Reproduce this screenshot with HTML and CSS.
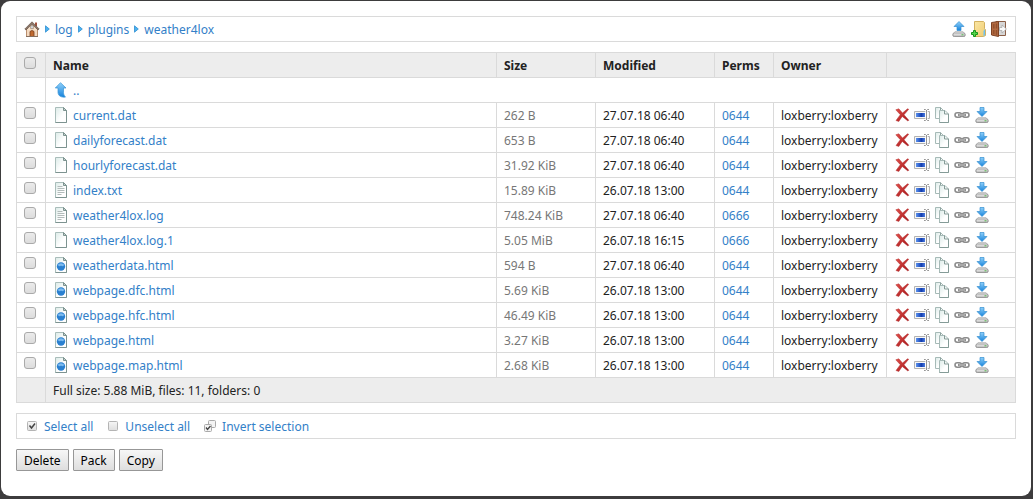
FILE: index.html
```html
<!DOCTYPE html>
<html lang="en">
<head>
<meta charset="utf-8">
<title>weather4lox</title>
<link rel="stylesheet" href="styles.css">
</head>
<body>
<svg class="sprite" aria-hidden="true">
  <defs>
    <linearGradient id="g-page" x1="0" y1="0" x2="1" y2="1"><stop offset="0" stop-color="#dcebe8"/><stop offset=".6" stop-color="#fff"/></linearGradient>
    <linearGradient id="g-blue" x1="0" y1="0" x2="0" y2="1"><stop offset="0" stop-color="#8fd0fa"/><stop offset="1" stop-color="#1683dc"/></linearGradient>
    <linearGradient id="g-disk" x1="0" y1="0" x2="0" y2="1"><stop offset="0" stop-color="#f4f4f4"/><stop offset="1" stop-color="#b4b4b4"/></linearGradient>
    <linearGradient id="g-bar" x1="0" y1="0" x2="1" y2="0"><stop offset="0" stop-color="#5d93ee"/><stop offset=".6" stop-color="#123db0"/><stop offset="1" stop-color="#4a7be0"/></linearGradient>
    <linearGradient id="g-red" x1="0" y1="0" x2="1" y2="1"><stop offset="0" stop-color="#e0504a"/><stop offset="1" stop-color="#a31318"/></linearGradient>
    <linearGradient id="g-folder" x1="0" y1="0" x2="1" y2="1"><stop offset="0" stop-color="#fbe7a4"/><stop offset="1" stop-color="#efcb70"/></linearGradient>
    <linearGradient id="g-box" x1="0" y1="0" x2="0" y2="1"><stop offset="0" stop-color="#f6f6f6"/><stop offset="1" stop-color="#dedede"/></linearGradient>
  </defs>
  <symbol id="home" viewBox="0 0 16 16">
    <path d="M2.500 7.500h11v8h-11z" fill="#f3d9c0" stroke="#b98e6e"/>
    <path d="M11 1.500h2v4h-2z" fill="#a4513c"/>
    <path d="M8 3.400 3.200 8v1h9.600V8z" fill="#f8e2cb"/>
    <path d="M8 .8.8 8l1.200 1L8 3.200 14 9l1.200-1z" fill="#8d7667" stroke="#5b4a42" stroke-width=".6"/>
    <path d="M6.700 4.700h2.600v3H6.700z" fill="#d9e6f2" stroke="#8b6a50" stroke-width=".6"/>
    <path d="M6 15.500v-5q2-2 4 0v5z" fill="#c0692f" stroke="#78401e" stroke-width=".8"/>
    <path d="M2 15.500h12" stroke="#866f5f"/>
  </symbol>
  <symbol id="crumb" viewBox="0 0 5 8"><path d="M.5.8 4.300 4 .5 7.200z" fill="#4db2ee" stroke="#2d8ed3" stroke-width=".8"/></symbol>
  <symbol id="up" viewBox="0 0 16 16"><path d="M7.500.7 13 6h-2.500v4.500c0 2 .8 3.400 2 4.600-4.400.4-7.200-1.100-7.500-4.600V6H2.300z" fill="url(#g-blue)" stroke="#3693d6" stroke-width=".7"/></symbol>
  <symbol id="file" viewBox="0 0 16 16">
    <path d="M2.500.5h8l3 3v12h-11z" fill="url(#g-page)" stroke="#a9bdba"/>
    <path d="M13.500 3.500v12h-11" fill="none" stroke="#7d9390"/>
    <path d="M10.500.5v3h3z" fill="#c5d4d1" stroke="#7d9390"/>
  </symbol>
  <symbol id="text" viewBox="0 0 16 16">
    <use href="#file"/><path d="M4.500 4.500h5m-5 2h7m-7 2h7m-7 2h7m-7 2h4" stroke="#b3bcbb" fill="none"/>
  </symbol>
  <symbol id="html" viewBox="0 0 16 16">
    <use href="#file"/><circle cx="8" cy="9.500" r="4.200" fill="#2a80d0"/><path d="M4.500 8Q8 4.500 11.500 8 9.500 10 8 8.500 6.500 10 4.500 8z" fill="#7dbcf0"/>
  </symbol>
  <symbol id="disk" viewBox="0 0 16 16">
    <path d="M4 10.500h8l2 2.500v2H2v-2z" fill="#eee" stroke="#b4b4b4" stroke-width=".7"/>
    <rect x="2" y="12" width="12" height="3.600" rx="1.300" fill="url(#g-disk)" stroke="#858585" stroke-width=".8"/>
    <path d="M10.500 13.800h2" stroke="#51b84b"/>
  </symbol>
  <symbol id="upload" viewBox="0 0 16 16"><use href="#disk"/><path d="M8 .5 13 5.500h-3v4H6v-4H3z" fill="url(#g-blue)" stroke="#358fd1" stroke-width=".7"/></symbol>
  <symbol id="download" viewBox="0 0 16 16"><use href="#disk"/><path d="M6 .5h4v4h3l-5 5-5-5h3z" fill="url(#g-blue)" stroke="#358fd1" stroke-width=".7"/></symbol>
  <symbol id="folder" viewBox="0 0 16 16">
    <path d="M3.500.5h9l1 1v6l1 1v6l-2 1h-9z" fill="url(#g-folder)" stroke="#d3b160"/>
    <path d="M12.500 15.500V10l1.500-2v6z" fill="#6ec1ef"/>
    <path d="M2.500 9.500h2v2h2v2h-2v2h-2v-2h-2v-2h2z" fill="#57d64c" stroke="#15951b"/>
  </symbol>
  <symbol id="door" viewBox="0 0 16 16">
    <path d="M5 .5h9.500v14H5z" fill="#d6d6d6" stroke="#8c6048"/>
    <path d="M.5 1.500 7.500.5v15l-7-1.500z" fill="#b26a41" stroke="#7d4326"/>
    <path d="M2 3.300 3.500 3v4.500H2zM4.800 2.800l1.400-.3v5H4.800zM2 9h1.500v4.300L2 13zm2.800 0h1.400v5l-1.400-.3z" fill="#92502e"/>
    <path d="M8.500 6.500H11V4l4.500 4-4.500 4V9.500H8.500z" fill="#fafafa" stroke="#a5a5a5" stroke-width=".7"/>
  </symbol>
  <symbol id="delete" viewBox="0 0 16 16"><path d="M1.800 2.800 4.800 1.800 8.500 6 13.500 1.800l1.200.5L10 7.800l4.800 5.400-.9.800L8.200 9.400 4.800 14.500 2 13.500l4.300-5.800z" fill="url(#g-red)" stroke="#b53030" stroke-width=".5"/></symbol>
  <symbol id="rename" viewBox="0 0 16 16">
    <path d="M.5 4.500h15v7H.5z" fill="#f7f7f7" stroke="#b2b2b2"/><path d="M2 6h9v4H2z" fill="url(#g-bar)"/>
    <path d="M12.500 3v10" stroke="#fff" stroke-width="2.400"/><path d="M10 2.500h1.500l1 1 1-1H15M12.500 3v10M10 13.500h1.500l1-1 1 1H15" stroke="#8a8a8a" stroke-width=".9" fill="none"/>
  </symbol>
  <symbol id="copy" viewBox="0 0 16 16">
    <path d="M1.500.5h5l3 3v8h-8z" fill="url(#g-page)" stroke="#a6bab7"/><path d="M6.500.5v3h3" fill="none" stroke="#8ea39f"/>
    <path d="M5.500 3.500h5.500l3.500 3.500v8.500h-9z" fill="url(#g-page)" stroke="#a6bab7"/><path d="M10.500 3.500V7h4v8.500h-9" fill="none" stroke="#849b97"/>
  </symbol>
  <symbol id="link" viewBox="0 0 16 16">
    <rect x="1" y="5.800" width="6.500" height="4.400" rx="2.200" fill="#fff" stroke="#8c8c8c" stroke-width="1.600"/><rect x="8.500" y="5.800" width="6.500" height="4.400" rx="2.200" fill="#fff" stroke="#8c8c8c" stroke-width="1.600"/>
    <path d="M4 8h8" stroke="#777" stroke-width="2.400"/><path d="M4.500 8h7" stroke="#dcdcdc"/>
  </symbol>
  <symbol id="all" viewBox="0 0 16 16"><rect x="3.500" y="3.500" width="9" height="9" rx="1" fill="url(#g-box)" stroke="#b4b4b4"/><path d="m5.500 7.500 2 2.500L11 5.500" fill="none" stroke="#444" stroke-width="1.500"/></symbol>
  <symbol id="none" viewBox="0 0 16 16"><rect x="3.500" y="3.500" width="9" height="9" rx="1" fill="url(#g-box)" stroke="#b4b4b4"/></symbol>
  <symbol id="invert" viewBox="0 0 16 16"><rect x="6.500" y="2.500" width="7" height="7" rx="1" fill="#f4f4f4" stroke="#aaa"/><rect x="2.500" y="6.500" width="7" height="7" rx="1" fill="#f4f4f4" stroke="#aaa"/><path d="m4 9.500 1.500 2L8.500 8" fill="none" stroke="#444" stroke-width="1.300"/></symbol>
</svg>
<main class="panel">
  <header class="bar">
    <nav class="crumbs" aria-label="Path">
      <a href="#" aria-label="Home"><svg class="icon"><use href="#home"/></svg></a>
      <svg class="crumb"><use href="#crumb"/></svg><a href="#">log</a>
      <svg class="crumb"><use href="#crumb"/></svg><a href="#">plugins</a>
      <svg class="crumb"><use href="#crumb"/></svg><a href="#">weather4lox</a>
    </nav>
    <div class="actions">
      <a href="#" aria-label="Upload"><svg class="icon"><use href="#upload"/></svg></a>
      <a href="#" aria-label="Create new"><svg class="icon"><use href="#folder"/></svg></a>
      <a href="#" aria-label="Log out"><svg class="icon"><use href="#door"/></svg></a>
    </div>
  </header>
  <table class="files">
    <colgroup><col class="c-check"><col><col class="c-size"><col class="c-date"><col class="c-perms"><col class="c-owner"><col class="c-actions"></colgroup>
    <thead>
      <tr><th><input type="checkbox" class="check" aria-label="Select all files"></th><th>Name</th><th>Size</th><th>Modified</th><th>Perms</th><th>Owner</th><th></th></tr>
    </thead>
    <tbody>
      <tr><td></td><td colspan="6"><a class="name" href="#"><svg class="icon"><use href="#up"/></svg>..</a></td></tr>
      <tr><td><input type="checkbox" class="check" aria-label="current.dat"></td><td><a class="name" href="#"><svg class="icon"><use href="#file"/></svg>current.dat</a></td><td class="size">262 B</td><td>27.07.18 06:40</td><td><a href="#">0644</a></td><td>loxberry:loxberry</td><td><div class="actions"><a href="#" aria-label="Delete"><svg class="icon"><use href="#delete"/></svg></a><a href="#" aria-label="Rename"><svg class="icon"><use href="#rename"/></svg></a><a href="#" aria-label="Copy"><svg class="icon"><use href="#copy"/></svg></a><a href="#" aria-label="Link"><svg class="icon"><use href="#link"/></svg></a><a href="#" aria-label="Download"><svg class="icon"><use href="#download"/></svg></a></div></td></tr>
      <tr><td><input type="checkbox" class="check" aria-label="dailyforecast.dat"></td><td><a class="name" href="#"><svg class="icon"><use href="#file"/></svg>dailyforecast.dat</a></td><td class="size">653 B</td><td>27.07.18 06:40</td><td><a href="#">0644</a></td><td>loxberry:loxberry</td><td><div class="actions"><a href="#" aria-label="Delete"><svg class="icon"><use href="#delete"/></svg></a><a href="#" aria-label="Rename"><svg class="icon"><use href="#rename"/></svg></a><a href="#" aria-label="Copy"><svg class="icon"><use href="#copy"/></svg></a><a href="#" aria-label="Link"><svg class="icon"><use href="#link"/></svg></a><a href="#" aria-label="Download"><svg class="icon"><use href="#download"/></svg></a></div></td></tr>
      <tr><td><input type="checkbox" class="check" aria-label="hourlyforecast.dat"></td><td><a class="name" href="#"><svg class="icon"><use href="#file"/></svg>hourlyforecast.dat</a></td><td class="size">31.92 KiB</td><td>27.07.18 06:40</td><td><a href="#">0644</a></td><td>loxberry:loxberry</td><td><div class="actions"><a href="#" aria-label="Delete"><svg class="icon"><use href="#delete"/></svg></a><a href="#" aria-label="Rename"><svg class="icon"><use href="#rename"/></svg></a><a href="#" aria-label="Copy"><svg class="icon"><use href="#copy"/></svg></a><a href="#" aria-label="Link"><svg class="icon"><use href="#link"/></svg></a><a href="#" aria-label="Download"><svg class="icon"><use href="#download"/></svg></a></div></td></tr>
      <tr><td><input type="checkbox" class="check" aria-label="index.txt"></td><td><a class="name" href="#"><svg class="icon"><use href="#text"/></svg>index.txt</a></td><td class="size">15.89 KiB</td><td>26.07.18 13:00</td><td><a href="#">0644</a></td><td>loxberry:loxberry</td><td><div class="actions"><a href="#" aria-label="Delete"><svg class="icon"><use href="#delete"/></svg></a><a href="#" aria-label="Rename"><svg class="icon"><use href="#rename"/></svg></a><a href="#" aria-label="Copy"><svg class="icon"><use href="#copy"/></svg></a><a href="#" aria-label="Link"><svg class="icon"><use href="#link"/></svg></a><a href="#" aria-label="Download"><svg class="icon"><use href="#download"/></svg></a></div></td></tr>
      <tr><td><input type="checkbox" class="check" aria-label="weather4lox.log"></td><td><a class="name" href="#"><svg class="icon"><use href="#text"/></svg>weather4lox.log</a></td><td class="size">748.24 KiB</td><td>27.07.18 06:40</td><td><a href="#">0666</a></td><td>loxberry:loxberry</td><td><div class="actions"><a href="#" aria-label="Delete"><svg class="icon"><use href="#delete"/></svg></a><a href="#" aria-label="Rename"><svg class="icon"><use href="#rename"/></svg></a><a href="#" aria-label="Copy"><svg class="icon"><use href="#copy"/></svg></a><a href="#" aria-label="Link"><svg class="icon"><use href="#link"/></svg></a><a href="#" aria-label="Download"><svg class="icon"><use href="#download"/></svg></a></div></td></tr>
      <tr><td><input type="checkbox" class="check" aria-label="weather4lox.log.1"></td><td><a class="name" href="#"><svg class="icon"><use href="#file"/></svg>weather4lox.log.1</a></td><td class="size">5.05 MiB</td><td>26.07.18 16:15</td><td><a href="#">0666</a></td><td>loxberry:loxberry</td><td><div class="actions"><a href="#" aria-label="Delete"><svg class="icon"><use href="#delete"/></svg></a><a href="#" aria-label="Rename"><svg class="icon"><use href="#rename"/></svg></a><a href="#" aria-label="Copy"><svg class="icon"><use href="#copy"/></svg></a><a href="#" aria-label="Link"><svg class="icon"><use href="#link"/></svg></a><a href="#" aria-label="Download"><svg class="icon"><use href="#download"/></svg></a></div></td></tr>
      <tr><td><input type="checkbox" class="check" aria-label="weatherdata.html"></td><td><a class="name" href="#"><svg class="icon"><use href="#html"/></svg>weatherdata.html</a></td><td class="size">594 B</td><td>27.07.18 06:40</td><td><a href="#">0644</a></td><td>loxberry:loxberry</td><td><div class="actions"><a href="#" aria-label="Delete"><svg class="icon"><use href="#delete"/></svg></a><a href="#" aria-label="Rename"><svg class="icon"><use href="#rename"/></svg></a><a href="#" aria-label="Copy"><svg class="icon"><use href="#copy"/></svg></a><a href="#" aria-label="Link"><svg class="icon"><use href="#link"/></svg></a><a href="#" aria-label="Download"><svg class="icon"><use href="#download"/></svg></a></div></td></tr>
      <tr><td><input type="checkbox" class="check" aria-label="webpage.dfc.html"></td><td><a class="name" href="#"><svg class="icon"><use href="#html"/></svg>webpage.dfc.html</a></td><td class="size">5.69 KiB</td><td>26.07.18 13:00</td><td><a href="#">0644</a></td><td>loxberry:loxberry</td><td><div class="actions"><a href="#" aria-label="Delete"><svg class="icon"><use href="#delete"/></svg></a><a href="#" aria-label="Rename"><svg class="icon"><use href="#rename"/></svg></a><a href="#" aria-label="Copy"><svg class="icon"><use href="#copy"/></svg></a><a href="#" aria-label="Link"><svg class="icon"><use href="#link"/></svg></a><a href="#" aria-label="Download"><svg class="icon"><use href="#download"/></svg></a></div></td></tr>
      <tr><td><input type="checkbox" class="check" aria-label="webpage.hfc.html"></td><td><a class="name" href="#"><svg class="icon"><use href="#html"/></svg>webpage.hfc.html</a></td><td class="size">46.49 KiB</td><td>26.07.18 13:00</td><td><a href="#">0644</a></td><td>loxberry:loxberry</td><td><div class="actions"><a href="#" aria-label="Delete"><svg class="icon"><use href="#delete"/></svg></a><a href="#" aria-label="Rename"><svg class="icon"><use href="#rename"/></svg></a><a href="#" aria-label="Copy"><svg class="icon"><use href="#copy"/></svg></a><a href="#" aria-label="Link"><svg class="icon"><use href="#link"/></svg></a><a href="#" aria-label="Download"><svg class="icon"><use href="#download"/></svg></a></div></td></tr>
      <tr><td><input type="checkbox" class="check" aria-label="webpage.html"></td><td><a class="name" href="#"><svg class="icon"><use href="#html"/></svg>webpage.html</a></td><td class="size">3.27 KiB</td><td>26.07.18 13:00</td><td><a href="#">0644</a></td><td>loxberry:loxberry</td><td><div class="actions"><a href="#" aria-label="Delete"><svg class="icon"><use href="#delete"/></svg></a><a href="#" aria-label="Rename"><svg class="icon"><use href="#rename"/></svg></a><a href="#" aria-label="Copy"><svg class="icon"><use href="#copy"/></svg></a><a href="#" aria-label="Link"><svg class="icon"><use href="#link"/></svg></a><a href="#" aria-label="Download"><svg class="icon"><use href="#download"/></svg></a></div></td></tr>
      <tr><td><input type="checkbox" class="check" aria-label="webpage.map.html"></td><td><a class="name" href="#"><svg class="icon"><use href="#html"/></svg>webpage.map.html</a></td><td class="size">2.68 KiB</td><td>26.07.18 13:00</td><td><a href="#">0644</a></td><td>loxberry:loxberry</td><td><div class="actions"><a href="#" aria-label="Delete"><svg class="icon"><use href="#delete"/></svg></a><a href="#" aria-label="Rename"><svg class="icon"><use href="#rename"/></svg></a><a href="#" aria-label="Copy"><svg class="icon"><use href="#copy"/></svg></a><a href="#" aria-label="Link"><svg class="icon"><use href="#link"/></svg></a><a href="#" aria-label="Download"><svg class="icon"><use href="#download"/></svg></a></div></td></tr>
    </tbody>
    <tfoot>
      <tr><td></td><td colspan="6">Full size: 5.88 MiB, files: 11, folders: 0</td></tr>
    </tfoot>
  </table>
  <div class="bar selection">
    <a class="pick" href="#"><svg class="icon"><use href="#all"/></svg>Select all</a>
    <a class="pick" href="#"><svg class="icon"><use href="#none"/></svg>Unselect all</a>
    <a class="pick" href="#"><svg class="icon"><use href="#invert"/></svg>Invert selection</a>
  </div>
  <div class="buttons">
    <button type="button">Delete</button>
    <button type="button">Pack</button>
    <button type="button">Copy</button>
  </div>
</main>
</body>
</html>
```
FILE: styles.css
```css
* { box-sizing: border-box; }

body {
  margin: 0;
  min-height: 100vh;
  display: flex;
  padding: 1px 2px 3px 1px;
  background: #3d3c3d;
  color: #222;
  font: 12px/18px "Noto Sans", sans-serif;
}

a { color: #3380c8; text-decoration: none; }
.sprite { position: absolute; width: 0; height: 0; }

.panel {
  flex: 1;
  display: flex;
  flex-direction: column;
  gap: 10px;
  padding: 15px;
  border-radius: 9px;
  background: #fff;
}

.bar {
  display: flex;
  align-items: center;
  justify-content: space-between;
  min-height: 26px;
  padding: 2px 8px 0 7px;
  border: 1px solid #dadada;
}

.icon { display: block; width: 16px; height: 16px; flex: none; }
.crumbs { display: flex; align-items: flex-start; gap: 5px; }
.crumb { width: 5px; height: 8px; margin-top: 4px; }
.actions { display: flex; align-items: flex-start; gap: 4px; height: 18px; }

.files {
  width: 100%;
  table-layout: fixed;
  border-collapse: collapse;
}
.files th, .files td {
  height: 25px;
  padding: 2px 7px 0;
  border: 1px solid #dadada;
  text-align: left;
  white-space: nowrap;
}
.files thead, .files tfoot { background: #ededed; }
.c-check { width: 29px; }
.c-size { width: 99px; }
.c-date { width: 119px; }
.c-perms { width: 59px; }
.c-owner { width: 113px; }
.c-actions { width: 129px; }
.files .size { color: #777; }
.name { display: flex; align-items: flex-start; gap: 4px; }

.check {
  appearance: none;
  display: block;
  width: 12px;
  height: 12px;
  margin: 0 0 7px;
  border: 1px solid #aaa;
  border-radius: 3px;
  background: linear-gradient(#ebebeb, #dcdcdc);
}
.check:checked { background: #3380c8; }

.selection { justify-content: flex-start; gap: 12px; }
.pick { display: flex; align-items: flex-start; gap: 4px; }

.buttons { display: flex; gap: 4px; }
.buttons button {
  height: 22px;
  padding: 2px 7px 0;
  border: 1px solid #979797;
  border-radius: 1px;
  background: linear-gradient(#f7f7f7, #dedede);
  color: #000;
  font: inherit;
}
```
